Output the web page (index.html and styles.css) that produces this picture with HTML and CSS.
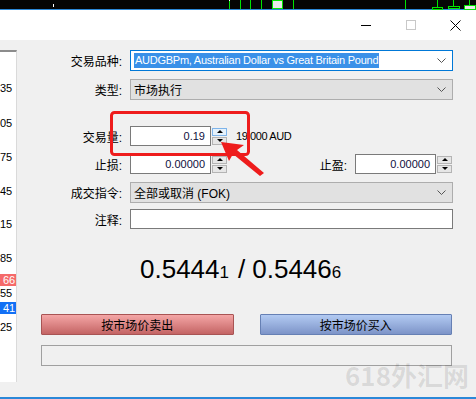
FILE: index.html
```html
<!DOCTYPE html>
<html lang="zh-CN">
<head>
    <meta charset="UTF-8">
    <meta name="viewport" content="width=device-width, initial-scale=1.0">
    <title>订单</title>
    <link rel="stylesheet" href="styles.css">
</head>
<body>
    <div class="chart">
        <span class="dot d1"></span>
        <span class="dot d2"></span>
        <span class="bar b1"></span>
        <span class="bar b2"></span>
        <span class="bar b3"></span>
        <span class="bar b4"></span>
        <span class="candle c1"></span>
        <span class="bar b5"></span>
        <span class="bar b6"></span>
        <span class="stem s1"></span>
        <span class="box x1"></span>
        <span class="stem s2"></span>
        <span class="box x2"></span>
        <span class="stem s3"></span>
        <span class="box x3"></span>
    </div>
    <div class="accent"></div>

    <div class="titlebar">
        <span class="winbtn">
            <svg width="10" height="10" viewBox="0 0 10 10"><path d="M0 5.5H10" stroke="#000" stroke-width="1"/></svg>
        </span>
        <span class="winbtn">
            <svg width="10" height="10" viewBox="0 0 10 10"><rect x="0.5" y="0.5" width="9" height="9" fill="none" stroke="#c8c8c8"/></svg>
        </span>
        <span class="winbtn">
            <svg width="11" height="11" viewBox="0 0 11 11"><path d="M0.5 0.5L10.5 10.5M10.5 0.5L0.5 10.5" stroke="#000" stroke-width="1"/></svg>
        </span>
    </div>

    <div class="main">
        <div class="quotes">
            <div class="q q-first">35</div>
            <div class="q q-22">05</div>
            <div class="q">75</div>
            <div class="q">45</div>
            <div class="q q-20">15</div>
            <div class="q">85</div>
            <div class="q q-tight"><span class="tag tag-ask">66</span></div>
            <div class="q q-none">55</div>
            <div class="q q-tight q-2"><span class="tag tag-bid">41</span></div>
            <div class="q q-wide">25</div>
        </div>

        <div class="dialog">
            <div class="row row-symbol">
                <span class="lbl">交易品种:</span>
                <div class="combo combo-focus">
                    <span class="selected">AUDGBPm, Australian Dollar vs Great Britain Pound</span>
                    <svg class="chev" width="9" height="5" viewBox="0 0 9 5"><path d="M0.5 0.5L4.5 4.5L8.5 0.5" fill="none" stroke="#555"/></svg>
                </div>
            </div>

            <div class="row row-type">
                <span class="lbl">类型:</span>
                <div class="combo">
                    <span class="value">市场执行</span>
                    <svg class="chev" width="9" height="5" viewBox="0 0 9 5"><path d="M0.5 0.5L4.5 4.5L8.5 0.5" fill="none" stroke="#555"/></svg>
                </div>
            </div>

            <div class="row row-volume">
                <span class="lbl">交易量:</span>
                <div class="num">0.19</div>
                <div class="spin">
                    <span class="spin-up hot"><i class="tri-up"></i></span>
                    <span class="spin-down"><i class="tri-down"></i></span>
                </div>
                <span class="hint">19 000 AUD</span>
            </div>

            <div class="row row-stops">
                <span class="lbl">止损:</span>
                <div class="num">0.00000</div>
                <div class="spin">
                    <span class="spin-up"><i class="tri-up"></i></span>
                    <span class="spin-down"><i class="tri-down"></i></span>
                </div>
                <div class="tp">
                    <span class="tp-lbl">止盈:</span>
                    <div class="num">0.00000</div>
                    <div class="spin">
                        <span class="spin-up"><i class="tri-up"></i></span>
                        <span class="spin-down"><i class="tri-down"></i></span>
                    </div>
                </div>
            </div>

            <div class="row row-fill">
                <span class="lbl">成交指令:</span>
                <div class="combo">
                    <span class="value">全部或取消 (FOK)</span>
                    <svg class="chev" width="9" height="5" viewBox="0 0 9 5"><path d="M0.5 0.5L4.5 4.5L8.5 0.5" fill="none" stroke="#555"/></svg>
                </div>
            </div>

            <div class="row row-comment">
                <span class="lbl">注释:</span>
                <div class="text"></div>
            </div>

            <div class="price">
                <span>0.5444</span><small>1</small><span class="slash">/</span><span>0.5446</span><small>6</small>
            </div>

            <div class="actions">
                <button class="btn btn-sell">按市场价卖出</button>
                <button class="btn btn-buy">按市场价买入</button>
            </div>

            <div class="progress"></div>
        </div>
    </div>

    <div class="watermark">618外汇网</div>

    <svg class="markup" width="476" height="399" viewBox="0 0 476 399">
        <rect x="111.5" y="112.5" width="137" height="42" rx="3" fill="none" stroke="#ee1c1c" stroke-width="3"/>
        <polygon points="221,142 244,145 237,150 264,173 260,176 233,154 229,161" fill="#ee1c1c"/>
    </svg>
</body>
</html>
```

FILE: styles.css
```css
html { background-color: #f0f0f0; }
body {
    margin: 0;
    width: 476px;
    height: 399px;
    overflow: hidden;
    position: relative;
    background-color: #f0f0f0;
    font-family: "Liberation Sans", "Noto Sans CJK SC", sans-serif;
    font-size: 12px;
    color: #000;
}
/* window frame edge at the bottom */
body::after {
    content: "";
    position: absolute;
    left: 0;
    right: 0;
    bottom: 0;
    height: 2px;
    background-color: #2b88d8;
}

/* chart strip at the top */
.chart {
    position: relative;
    height: 9px;
    background-color: #050505;
}
.chart span {
    position: absolute;
    box-sizing: border-box;
}
.dot { width: 1px; background-color: #fff; }
.d1 { left: 53px; top: 4px; height: 3px; }
.d2 { left: 229px; top: 0; height: 1px; }
.bar { top: 0; width: 1px; height: 9px; background-color: #00e400; }
.b1 { left: 229px; top: 1px; height: 8px; }
.b2 { left: 240px; }
.b3 { left: 250px; }
.b4 { left: 261px; }
.b5 { left: 293px; }
.b6 { left: 405px; }
.candle { left: 272px; top: 0; width: 11px; height: 9px; border: 1px solid #00e400; background-color: #e8e8e8; }
.stem { width: 1px; top: 0; background-color: #00e400; }
.s1 { left: 437px; height: 7px; }
.s2 { left: 453px; height: 6px; }
.s3 { left: 469px; height: 5px; }
.box { border: 1px solid #00e400; }
.x1 { left: 432px; top: 7px; width: 11px; height: 3px; }
.x2 { left: 448px; top: 6px; width: 12px; height: 3px; }
.x3 { left: 464px; top: 5px; width: 12px; height: 5px; background-color: #e8e8e8; }

.accent {
    height: 1px;
    background-color: #2b88d8;
}

/* window title bar */
.titlebar {
    height: 30px;
    background-color: #fff;
    display: flex;
    justify-content: flex-end;
    align-items: center;
    margin-right: -2px;
}
.winbtn {
    width: 45px;
    height: 30px;
    display: flex;
    align-items: center;
    justify-content: center;
}
.winbtn svg { display: block; }

.main {
    display: flex;
    height: 357px;
}

/* price ladder on the left */
.quotes {
    flex: none;
    box-sizing: border-box;
    width: 17px;
    height: 332px;
    margin-top: 10px;
    background-color: #fff;
    border-top: 2px solid #8c8c8c;
    border-right: 1px solid #dadada;
    overflow: hidden;
    font-size: 11px;
}
.q {
    height: 13px;
    line-height: 13px;
    margin-top: 21px;
    padding-right: 7px;
    text-align: right;
    white-space: nowrap;
}
.q-first { margin-top: 30px; }
.q-22 { margin-top: 22px; }
.q-20 { margin-top: 20px; }
.q-tight { margin-top: 9px; padding-right: 4px; }
.q-none { margin-top: 0; }
.q-2 { margin-top: 2px; }
.q-wide { margin-top: 6px; }
.tag {
    padding: 0 3px;
    color: #fff;
}
.tag-ask { background-color: #f56a6a; }
.tag-bid { background-color: #1270f5; }

/* order form */
.dialog {
    flex: 1;
    padding-right: 23px;
}
.row {
    display: flex;
    align-items: center;
}
.lbl {
    flex: none;
    width: 105px;
    margin-right: 8px;
    text-align: right;
    font-size: 12px;
}
.row-symbol { margin-top: 10px; height: 21px; }
.row-type { margin-top: 8px; height: 21px; }
.row-volume { margin-top: 26px; height: 20px; }
.row-stops { margin-top: 8px; height: 20px; }
.row-fill { margin-top: 8px; height: 21px; }
.row-comment { margin-top: 6px; height: 20px; }

.combo {
    flex: 1;
    box-sizing: border-box;
    height: 21px;
    display: flex;
    align-items: center;
    padding: 0 6px 0 3px;
    background-color: #e1e1e1;
    border: 1px solid #adadad;
}
.combo-focus {
    background-color: #fff;
    border-color: #0078d7;
}
.value { flex: 1; }
.selected {
    flex: none;
    margin-right: auto;
    height: 15px;
    line-height: 15px;
    padding: 0 1px;
    background-color: #3a90e8;
    color: #fff;
    font-size: 11px;
    letter-spacing: -0.25px;
}
.chev { flex: none; display: block; }

.num {
    flex: none;
    box-sizing: border-box;
    width: 81px;
    height: 20px;
    line-height: 18px;
    padding-right: 5px;
    text-align: right;
    background-color: #fff;
    border: 1px solid #7a7a7a;
    font-size: 11px;
    color: #101040;
}
.text {
    flex: 1;
    box-sizing: border-box;
    height: 20px;
    background-color: #fff;
    border: 1px solid #7a7a7a;
}

.spin {
    flex: none;
    width: 15px;
    margin-left: 1px;
    display: flex;
    flex-direction: column;
    gap: 1px;
}
.spin span {
    box-sizing: border-box;
    height: 8px;
    display: flex;
    align-items: center;
    justify-content: center;
    background-color: #e6e6e6;
    border: 1px solid #b4b4b4;
}
.spin span.hot {
    background-color: #e5f1fb;
    border-color: #7eb4ea;
}
.tri-up, .tri-down {
    width: 0;
    height: 0;
    border-left: 3px solid transparent;
    border-right: 3px solid transparent;
}
.tri-up { border-bottom: 3px solid #000; }
.tri-down { border-top: 3px solid #000; }

.hint {
    margin-left: 9px;
    font-size: 11px;
    letter-spacing: -0.4px;
}

.tp {
    margin-left: auto;
    margin-right: 1px;
    display: flex;
    align-items: center;
}
.tp-lbl { margin-right: 8px; }

/* bid / ask */
.price {
    margin-top: 25px;
    padding-left: 123px;
    height: 30px;
    line-height: 30px;
    font-size: 26px;
    white-space: nowrap;
}
.price small {
    font-size: 17px;
}
.slash {
    margin: 0 7px 0 9px;
}

.actions {
    margin-top: 30px;
    padding: 0 1px 0 24px;
    display: flex;
    gap: 26px;
}
.btn {
    flex: 1;
    height: 21px;
    padding: 0;
    font-family: "Liberation Sans", "Noto Sans CJK SC", sans-serif;
    font-size: 12px;
    color: #000;
    border-radius: 1px;
    cursor: pointer;
}
.btn-sell {
    background: linear-gradient(#f4a6a6, #c46464);
    border: 1px solid #a85454;
}
.btn-buy {
    background: linear-gradient(#b2caf2, #7d94c8);
    border: 1px solid #6680b4;
}

.progress {
    box-sizing: border-box;
    margin: 10px 1px 0 24px;
    height: 21px;
    border: 1px solid #a0a0a0;
}

.watermark {
    position: absolute;
    left: 345px;
    top: 360px;
    font-family: "Noto Sans CJK SC", sans-serif;
    font-weight: bold;
    font-size: 26px;
    line-height: 30px;
    color: rgba(0, 0, 0, 0.1);
}

.markup {
    position: absolute;
    left: 0;
    top: 0;
    pointer-events: none;
}
```
